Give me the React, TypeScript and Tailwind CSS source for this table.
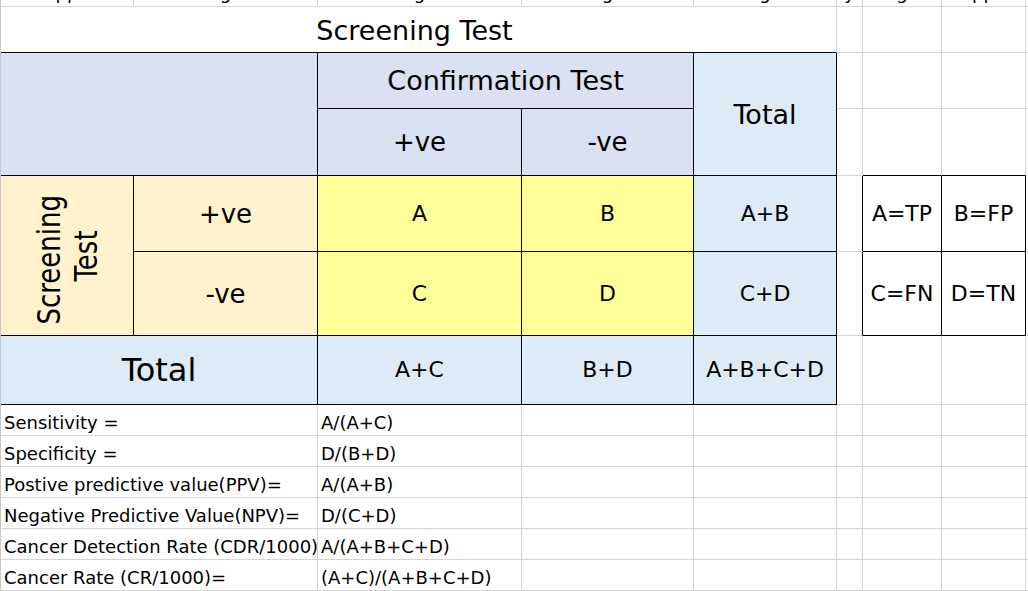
import React from 'react';

type Line = 'k' | 'g' | 'n';

type CellProps = {
  className?: string;
  r?: Line;
  b?: Line;
  children?: React.ReactNode;
};

// spreadsheet cell: draws only its right and bottom edge (gray gridline or black border)
function Cell({ className = '', r = 'g', b = 'g', children }: CellProps) {
  const right = r === 'k' ? 'border-r border-r-black' : r === 'g' ? 'border-r border-r-[#d4d4d4]' : '';
  const bottom = b === 'k' ? 'border-b border-b-black' : b === 'g' ? 'border-b border-b-[#d4d4d4]' : '';
  return <div className={`flex items-center justify-center ${right} ${bottom} ${className}`}>{children}</div>;
}

// row above the title is scrolled off, only descenders show
const clipped = ['pp', 'g', 'g', 'g', 'g', 'y', 'g', 'pp'];

const formulas = [
  ['Sensitivity =', 'A/(A+C)'],
  ['Specificity =', 'D/(B+D)'],
  ['Postive predictive value(PPV)=', 'A/(A+B)'],
  ['Negative Predictive Value(NPV)=', 'D/(C+D)'],
  ['Cancer Detection Rate (CDR/1000)', 'A/(A+B+C+D)'],
  ['Cancer Rate (CR/1000)=', '(A+C)/(A+B+C+D)'],
];

function Blank({ last = false }: { last?: boolean }) {
  return <Cell r={last ? 'n' : 'g'} />;
}

export default function App() {
  return (
    <div className="h-[591px] w-[1028px] overflow-hidden border-l border-l-[#c8c8c8] bg-white font-['DejaVu_Sans',sans-serif] text-black">
      <div className="grid grid-cols-[133px_184px_204px_172px_143px_26px_79px_84px_1fr] grid-rows-[7px_46px_56px_67px_76px_84px_69px_31px_31px_31px_31px_31px_31px]">
        {/* top strip */}
        {clipped.map((t, i) => (
          <Cell key={i} className="items-start overflow-hidden" b="g">
            <span className="-mt-[16px] block text-[18px] leading-[18px]">{t}</span>
          </Cell>
        ))}
        <Cell r="n" className="border-b-[#c0c0c0]" />

        {/* title */}
        <Cell className="col-span-5 pr-[8px] pt-[2px] text-[27px] leading-none" b="k">
          Screening Test
        </Cell>
        <Blank />
        <Blank />
        <Blank />
        <Blank last />

        {/* header rows */}
        <Cell className="col-span-2 row-span-2 bg-[#d9e1f2]" r="k" b="k" />
        <Cell className="col-span-2 bg-[#d9e1f2] text-[27px] leading-none" r="k" b="k">
          Confirmation Test
        </Cell>
        <Cell className="row-span-2 bg-[#ddebf7] text-[27px] leading-none" r="k" b="k">
          Total
        </Cell>
        <Blank />
        <Blank />
        <Blank />
        <Blank last />

        <Cell className="bg-[#d9e1f2] text-[26px] leading-none" r="k" b="k">
          +ve
        </Cell>
        <Cell className="bg-[#d9e1f2] text-[26px] leading-none" r="k" b="k">
          -ve
        </Cell>
        <Blank />
        <Cell b="k" />
        <Cell b="k" />
        <Blank last />

        {/* +ve row */}
        <Cell className="row-span-2 bg-[#fff2cc]" r="k" b="k">
          <div className="scale-x-[1.25]">
            <div className="rotate-180 text-center text-[26px] leading-[30px] [writing-mode:vertical-rl]">
              <span className="block pe-2">Screening</span>
              <span className="block">Test</span>
            </div>
          </div>
        </Cell>
        <Cell className="bg-[#fff2cc] text-[26px] leading-none" r="k" b="k">
          +ve
        </Cell>
        <Cell className="bg-[#ffff99] text-[22px] leading-none" r="k" b="k">
          A
        </Cell>
        <Cell className="bg-[#ffff99] text-[22px] leading-none" r="k" b="k">
          B
        </Cell>
        <Cell className="bg-[#ddebf7] text-[22px] leading-none" r="k" b="k">
          A+B
        </Cell>
        <Cell r="k" />
        <Cell className="text-[22px] leading-none" r="k" b="k">
          A=TP
        </Cell>
        <Cell className="text-[22px] leading-none" r="k" b="k">
          B=FP
        </Cell>
        <Blank last />

        {/* -ve row */}
        <Cell className="bg-[#fff2cc] text-[26px] leading-none" r="k" b="k">
          -ve
        </Cell>
        <Cell className="bg-[#ffff99] text-[22px] leading-none" r="k" b="k">
          C
        </Cell>
        <Cell className="bg-[#ffff99] text-[22px] leading-none" r="k" b="k">
          D
        </Cell>
        <Cell className="bg-[#ddebf7] text-[22px] leading-none" r="k" b="k">
          C+D
        </Cell>
        <Cell r="k" />
        <Cell className="text-[22px] leading-none" r="k" b="k">
          C=FN
        </Cell>
        <Cell className="text-[22px] leading-none" r="k" b="k">
          D=TN
        </Cell>
        <Blank last />

        {/* totals */}
        <Cell className="col-span-2 bg-[#ddebf7] text-[32px] leading-none" r="k" b="k">
          Total
        </Cell>
        <Cell className="bg-[#ddebf7] text-[22px] leading-none" r="k" b="k">
          A+C
        </Cell>
        <Cell className="bg-[#ddebf7] text-[22px] leading-none" r="k" b="k">
          B+D
        </Cell>
        <Cell className="bg-[#ddebf7] text-[22px] leading-none" r="k" b="k">
          A+B+C+D
        </Cell>
        <Blank />
        <Blank />
        <Blank />
        <Blank last />

        {/* formulas */}
        {formulas.map(([label, value]) => (
          <React.Fragment key={label}>
            <Cell className="col-span-2 items-end justify-start whitespace-nowrap pb-[3px] pl-[3px] text-[18px] leading-[18px]">
              {label}
            </Cell>
            <Cell className="items-end justify-start whitespace-nowrap pb-[3px] pl-[3px] text-[18px] leading-[18px]">
              {value}
            </Cell>
            <Blank />
            <Blank />
            <Blank />
            <Blank />
            <Blank />
            <Blank last />
          </React.Fragment>
        ))}
      </div>
    </div>
  );
}
